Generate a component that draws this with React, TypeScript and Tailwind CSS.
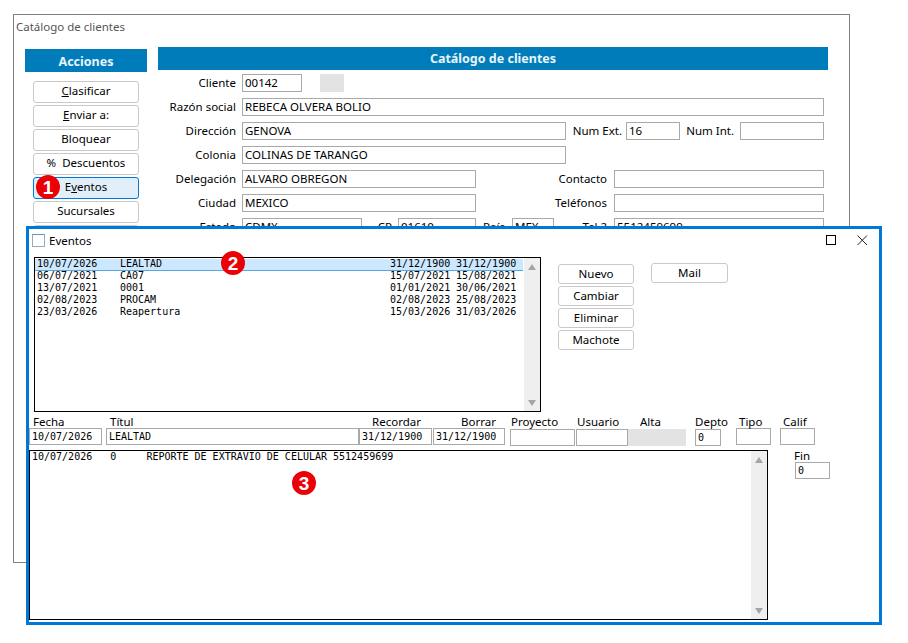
import React from "react";

const F = "font-['Noto_Sans',sans-serif]";
const M = "font-['DejaVu_Sans_Mono',monospace]";

function Badge({ n, cls }: { n: string; cls: string }) {
  return (
    <div className={`absolute w-6 h-6 rounded-full bg-[#ec0008] text-white flex items-center justify-center text-[19px] leading-none font-bold font-['Liberation_Sans',sans-serif] ${cls}`}>
      {n}
    </div>
  );
}

function Field({ w, v = "", cls = "" }: { w: string; v?: string; cls?: string }) {
  return (
    <div className={`h-[18px] border border-[#a9a9a9] bg-white pl-[2px] text-[11.5px] leading-[15px] text-black whitespace-nowrap overflow-hidden shrink-0 ${w} ${cls}`}>
      {v}
    </div>
  );
}

function Lbl({ w, t, cls = "" }: { w: string; t: string; cls?: string }) {
  return <div className={`text-right text-[11.5px] leading-[18px] text-black whitespace-nowrap shrink-0 ${w} ${cls}`}>{t}</div>;
}

function Btn({ children, active = false }: { children: React.ReactNode; active?: boolean }) {
  return (
    <div className={`w-[106px] h-[22px] rounded-[3px] border text-[11.5px] leading-[18px] text-center text-black ${active ? "border-[#0078d7] bg-[#e1effa]" : "border-[#c9c9c9] bg-white"}`}>
      {children}
    </div>
  );
}

function SmallBtn({ t, w = "w-[76px]" }: { t: string; w?: string }) {
  return <div className={`h-[20px] rounded-[3px] border border-[#c9c9c9] bg-white text-[11.5px] leading-[18px] text-center text-black ${w}`}>{t}</div>;
}

function Scroll({ h }: { h: string }) {
  return (
    <div className={`w-4 bg-[#efefef] flex flex-col items-center justify-between pt-[6px] pb-[5px] shrink-0 ${h}`}>
      <div className="w-0 h-0 border-x-[4px] border-x-transparent border-b-[6px] border-b-[#a5a5a5]" />
      <div className="w-0 h-0 border-x-[4px] border-x-transparent border-t-[6px] border-t-[#a5a5a5]" />
    </div>
  );
}

const rows = [
  ["10/07/2026", "LEALTAD", "31/12/1900", "31/12/1900"],
  ["06/07/2021", "CA07", "15/07/2021", "15/08/2021"],
  ["13/07/2021", "0001", "01/01/2021", "30/06/2021"],
  ["02/08/2023", "PROCAM", "02/08/2023", "25/08/2023"],
  ["23/03/2026", "Reapertura", "15/03/2026", "31/03/2026"],
];

function Col({ w, label, v = "", gray = false, labelCls = "", top = "mt-[16px]", ml = "ml-0" }: { w: string; label: string; v?: string; gray?: boolean; labelCls?: string; top?: string; ml?: string }) {
  return (
    <div className={`relative shrink-0 ${w} ${ml} ${top}`}>
      <div className={`absolute text-[11.5px] leading-[16px] text-black whitespace-nowrap ${labelCls}`}>{label}</div>
      <div className={`h-[17px] ${gray ? "bg-[#e3e3e3]" : "border border-[#a9a9a9] bg-white"} pl-[2px] text-[10px] leading-[15px] text-black ${M}`}>{v}</div>
    </div>
  );
}

export default function App() {
  return (
    <div className={`relative w-[908px] h-[643px] bg-white overflow-hidden pt-[14px] pl-[13px] ${F}`}>
      <div className="w-[837px] h-[549px] border border-[#808080] bg-white">
        <div className="h-[32px] pl-[2px] pt-[3px] text-[11.5px] leading-[18px] text-[#555]">Catálogo de clientes</div>
        <div className="flex">
          <div className="w-[122px] ml-[11px] mt-[2px] shrink-0">
            <div className="h-[23px] bg-[#007cba] text-[#e8f4fb] text-[12.5px] font-bold leading-[25px] text-center">Acciones</div>
            <div className="flex flex-col gap-[2px] ml-[8px] mt-[9px]">
              <Btn><span className="underline">C</span>lasificar</Btn>
              <Btn><span className="underline">E</span>nviar a:</Btn>
              <Btn>Bloquear</Btn>
              <Btn>%&nbsp;&nbsp;Descuentos</Btn>
              <Btn active>E<span className="underline">v</span>entos</Btn>
              <Btn>Sucursales</Btn>
              <Btn>&nbsp;</Btn>
            </div>
          </div>
          <div className="w-[670px] ml-[11px]">
            <div className="h-[23px] bg-[#007cba] text-[#e8f4fb] text-[12.5px] font-bold leading-[24px] text-center">Catálogo de clientes</div>
            <div className="flex flex-col gap-[6px] mt-[4px]">
              <div className="flex">
                <Lbl w="w-[78px]" t="Cliente" />
                <Field w="w-[60px] ml-[6px]" v="00142" />
                <div className="w-[24px] h-[18px] ml-[18px] bg-[#e3e3e3]" />
              </div>
              <div className="flex">
                <Lbl w="w-[78px]" t="Razón social" />
                <Field w="w-[582px] ml-[6px]" v="REBECA OLVERA BOLIO" />
              </div>
              <div className="flex">
                <Lbl w="w-[78px]" t="Dirección" />
                <Field w="w-[324px] ml-[6px]" v="GENOVA" />
                <Lbl w="w-[56px]" t="Num Ext." />
                <Field w="w-[54px] ml-[4px]" v="16" />
                <Lbl w="w-[54px]" t="Num Int." />
                <Field w="w-[84px] ml-[6px]" />
              </div>
              <div className="flex">
                <Lbl w="w-[78px]" t="Colonia" />
                <Field w="w-[324px] ml-[6px]" v="COLINAS DE TARANGO" />
              </div>
              <div className="flex">
                <Lbl w="w-[78px]" t="Delegación" />
                <Field w="w-[234px] ml-[6px]" v="ALVARO OBREGON" />
                <Lbl w="w-[131px]" t="Contacto" />
                <Field w="w-[210px] ml-[7px]" />
              </div>
              <div className="flex">
                <Lbl w="w-[78px]" t="Ciudad" />
                <Field w="w-[234px] ml-[6px]" v="MEXICO" />
                <Lbl w="w-[131px]" t="Teléfonos" />
                <Field w="w-[210px] ml-[7px]" />
              </div>
              <div className="flex">
                <Lbl w="w-[78px]" t="Estado" />
                <Field w="w-[120px] ml-[6px]" v="CDMX" />
                <Lbl w="w-[30px]" t="CP" />
                <Field w="w-[78px] ml-[6px]" v="01610" />
                <Lbl w="w-[29px]" t="País" />
                <Field w="w-[42px] ml-[7px]" v="MEX" />
                <Lbl w="w-[53px]" t="Tel 2" />
                <Field w="w-[210px] ml-[7px]" v="5512459699" />
              </div>
            </div>
          </div>
        </div>
      </div>

      {/* Eventos window */}
      <div className="absolute left-[26px] top-[226px] w-[856px] h-[399px] border-[3px] border-[#0078d7] bg-white flex flex-col">
        <div className="h-[28px] flex items-start pt-[3px] relative shrink-0">
          <div className="ml-[3px] mt-[2px] w-[13px] h-[13px] border border-[#9aa9bd] border-t-[#6f8fb8] bg-white" />
          <div className="ml-[4px] text-[11.5px] leading-[18px] text-black">Eventos</div>
          <svg className="absolute left-[796px] top-[5px]" width="12" height="12" viewBox="0 0 12 12" fill="none" stroke="#000" strokeWidth="1"><rect x="1.5" y="1.5" width="9" height="9" /></svg>
          <svg className="absolute left-[827px] top-[5px]" width="12" height="12" viewBox="0 0 12 12" fill="none" stroke="#222" strokeWidth="1"><path d="M1.5 1.5l9.5 9.5M11 1.5l-9.5 9.5" /></svg>
        </div>

        <div className="flex h-[155px] shrink-0">
          <div className={`ml-[5px] w-[507px] h-[155px] border border-black flex ${M} text-[10px] leading-[10px] text-black`}>
            <div className="w-[488px] pt-[1px] shrink-0">
              {rows.map((r, i) => (
                <div key={i} className={`flex h-[12px] whitespace-pre ${i === 0 ? "bg-[#cce8ff] border-b border-[#5aa7e0]" : ""}`}>
                  <span className="w-[85px] pl-[2px]">{r[0]}</span>
                  <span className="w-[270px]">{r[1]}</span>
                  <span className="w-[66px]">{r[2]}</span>
                  <span className="w-[66px]">{r[3]}</span>
                </div>
              ))}
            </div>
            <div className="w-px shrink-0" />
            <Scroll h="h-[153px]" />
          </div>
          <div className="flex flex-col gap-[2px] ml-[17px] mt-[7px]">
            <SmallBtn t="Nuevo" />
            <SmallBtn t="Cambiar" />
            <SmallBtn t="Eliminar" />
            <SmallBtn t="Machote" />
          </div>
          <div className="ml-[17px] mt-[6px]">
            <SmallBtn t="Mail" w="w-[77px]" />
          </div>
        </div>

        <div className="flex h-[38px] items-start shrink-0">
          <Col w="w-[73px]" label="Fecha" v="10/07/2026" labelCls="left-[4px] -top-[14px]" />
          <Col w="w-[253px]" ml="ml-[4px]" label="Títul" v="LEALTAD" labelCls="left-[4px] -top-[14px]" />
          <Col w="w-[73px]" label="Recordar" v="31/12/1900" labelCls="right-[11px] -top-[14px]" />
          <Col w="w-[72px]" ml="ml-px" label="Borrar" v="31/12/1900" labelCls="right-[9px] -top-[14px]" />
          <Col w="w-[65px]" ml="ml-[5px]" top="mt-[17px]" label="Proyecto" labelCls="left-[1px] -top-[15px]" />
          <Col w="w-[52px]" ml="ml-px" top="mt-[17px]" label="Usuario" labelCls="left-[1px] -top-[15px]" />
          <Col w="w-[58px]" top="mt-[17px]" gray label="Alta" labelCls="left-[12px] -top-[15px]" />
          <Col w="w-[26px]" ml="ml-[9px]" top="mt-[17px]" label="Depto" v="0" labelCls="left-0 -top-[15px]" />
          <Col w="w-[35px]" ml="ml-[15px]" label="Tipo" labelCls="left-[3px] -top-[14px]" />
          <Col w="w-[35px]" ml="ml-[9px]" label="Calif" labelCls="left-[3px] -top-[14px]" />
        </div>

        <div className="flex h-[170px] shrink-0">
          <div className={`w-[739px] h-[170px] border border-black flex ${M} text-[10px] leading-[12px] text-black`}>
            <div className="w-[721px] whitespace-pre pl-[2px] shrink-0">10/07/2026   0     REPORTE DE EXTRAVIO DE CELULAR 5512459699</div>
            <Scroll h="h-[168px]" />
          </div>
          <div className="relative ml-[27px] mt-[12px] w-[35px] h-[17px]">
            <div className="absolute -top-[14px] -left-px text-[11.5px] leading-[16px] text-black">Fin</div>
            <div className={`w-[35px] h-[17px] border border-[#a9a9a9] bg-white pl-[2px] text-[10px] leading-[15px] text-black ${M}`}>0</div>
          </div>
        </div>
      </div>

      <Badge n="1" cls="left-[36px] top-[175px]" />
      <Badge n="2" cls="left-[221px] top-[251px]" />
      <Badge n="3" cls="left-[292px] top-[471px]" />
    </div>
  );
}
